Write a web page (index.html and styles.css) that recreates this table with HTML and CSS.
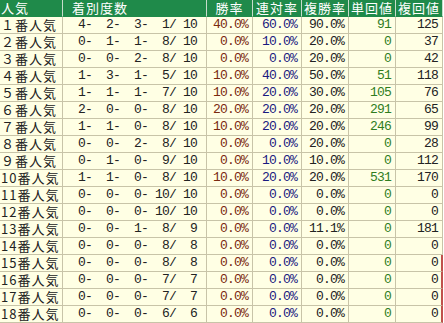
FILE: index.html
```html
<!DOCTYPE html>
<html lang="ja">
<head>
<meta charset="utf-8">
<link rel="stylesheet" href="styles.css">
</head>
<body>
<div class="table">
  <div class="row head">
    <div class="c lbl">人気</div>
    <div class="c ch">着別度数</div>
    <div class="c cc">勝率</div>
    <div class="c cc">連対率</div>
    <div class="c cc">複勝率</div>
    <div class="c cc">単回値</div>
    <div class="c cc">複回値</div>
  </div>
  <div class="row"><div class="c lbl">１番人気</div><div class="c num rec">  4-  2-  3-  1/ 10</div><div class="c num win">40.0%</div><div class="c num ren">60.0%</div><div class="c num">90.0%</div><div class="c num tan">91</div><div class="c num">125</div></div>
  <div class="row"><div class="c lbl">２番人気</div><div class="c num rec">  0-  1-  1-  8/ 10</div><div class="c num win">0.0%</div><div class="c num ren">10.0%</div><div class="c num">20.0%</div><div class="c num tan">0</div><div class="c num">37</div></div>
  <div class="row"><div class="c lbl">３番人気</div><div class="c num rec">  0-  0-  2-  8/ 10</div><div class="c num win">0.0%</div><div class="c num ren">0.0%</div><div class="c num">20.0%</div><div class="c num tan">0</div><div class="c num">42</div></div>
  <div class="row"><div class="c lbl">４番人気</div><div class="c num rec">  1-  3-  1-  5/ 10</div><div class="c num win">10.0%</div><div class="c num ren">40.0%</div><div class="c num">50.0%</div><div class="c num tan">51</div><div class="c num">118</div></div>
  <div class="row"><div class="c lbl">５番人気</div><div class="c num rec">  1-  1-  1-  7/ 10</div><div class="c num win">10.0%</div><div class="c num ren">20.0%</div><div class="c num">30.0%</div><div class="c num tan">105</div><div class="c num">76</div></div>
  <div class="row"><div class="c lbl">６番人気</div><div class="c num rec">  2-  0-  0-  8/ 10</div><div class="c num win">20.0%</div><div class="c num ren">20.0%</div><div class="c num">20.0%</div><div class="c num tan">291</div><div class="c num">65</div></div>
  <div class="row"><div class="c lbl">７番人気</div><div class="c num rec">  1-  1-  0-  8/ 10</div><div class="c num win">10.0%</div><div class="c num ren">20.0%</div><div class="c num">20.0%</div><div class="c num tan">246</div><div class="c num">99</div></div>
  <div class="row"><div class="c lbl">８番人気</div><div class="c num rec">  0-  0-  2-  8/ 10</div><div class="c num win">0.0%</div><div class="c num ren">0.0%</div><div class="c num">20.0%</div><div class="c num tan">0</div><div class="c num">28</div></div>
  <div class="row"><div class="c lbl">９番人気</div><div class="c num rec">  0-  1-  0-  9/ 10</div><div class="c num win">0.0%</div><div class="c num ren">10.0%</div><div class="c num">10.0%</div><div class="c num tan">0</div><div class="c num">112</div></div>
  <div class="row"><div class="c lbl">10番人気</div><div class="c num rec">  1-  1-  0-  8/ 10</div><div class="c num win">10.0%</div><div class="c num ren">20.0%</div><div class="c num">20.0%</div><div class="c num tan">531</div><div class="c num">170</div></div>
  <div class="row"><div class="c lbl">11番人気</div><div class="c num rec">  0-  0-  0- 10/ 10</div><div class="c num win">0.0%</div><div class="c num ren">0.0%</div><div class="c num">0.0%</div><div class="c num tan">0</div><div class="c num">0</div></div>
  <div class="row"><div class="c lbl">12番人気</div><div class="c num rec">  0-  0-  0- 10/ 10</div><div class="c num win">0.0%</div><div class="c num ren">0.0%</div><div class="c num">0.0%</div><div class="c num tan">0</div><div class="c num">0</div></div>
  <div class="row"><div class="c lbl">13番人気</div><div class="c num rec">  0-  0-  1-  8/  9</div><div class="c num win">0.0%</div><div class="c num ren">0.0%</div><div class="c num">11.1%</div><div class="c num tan">0</div><div class="c num">181</div></div>
  <div class="row"><div class="c lbl">14番人気</div><div class="c num rec">  0-  0-  0-  8/  8</div><div class="c num win">0.0%</div><div class="c num ren">0.0%</div><div class="c num">0.0%</div><div class="c num tan">0</div><div class="c num">0</div></div>
  <div class="row"><div class="c lbl">15番人気</div><div class="c num rec">  0-  0-  0-  8/  8</div><div class="c num win">0.0%</div><div class="c num ren">0.0%</div><div class="c num">0.0%</div><div class="c num tan">0</div><div class="c num last">0</div></div>
  <div class="row"><div class="c lbl">16番人気</div><div class="c num rec">  0-  0-  0-  7/  7</div><div class="c num win">0.0%</div><div class="c num ren">0.0%</div><div class="c num">0.0%</div><div class="c num tan">0</div><div class="c num last">0</div></div>
  <div class="row"><div class="c lbl">17番人気</div><div class="c num rec">  0-  0-  0-  7/  7</div><div class="c num win">0.0%</div><div class="c num ren">0.0%</div><div class="c num">0.0%</div><div class="c num tan">0</div><div class="c num last">0</div></div>
  <div class="row"><div class="c lbl">18番人気</div><div class="c num rec">  0-  0-  0-  6/  6</div><div class="c num win">0.0%</div><div class="c num ren">0.0%</div><div class="c num">0.0%</div><div class="c num tan">0</div><div class="c num last">0</div></div>
</div>
</body>
</html>
```

FILE: styles.css
```css
html, body {
  margin: 0;
  padding: 0;
  background: #ffffff;
}
.table {
  width: 443px;
  display: flex;
  flex-direction: column;
}
.row {
  display: grid;
  grid-template-columns: 63px 144px 46px 49px 47px 47px 47px;
  height: 17px;
}
.c {
  box-sizing: border-box;
  height: 17px;
  border-right: 1px solid #c8c4a8;
  border-bottom: 1px solid #c8c4a8;
  background: #ffffe4;
  white-space: pre;
  line-height: 16px;
  color: #222222;
}
.lbl {
  font-family: "Noto Sans CJK JP", sans-serif;
  font-size: 13px;
  letter-spacing: 1px;
  padding-left: 1px;
}
.num {
  font-family: "Liberation Mono", monospace;
  font-size: 13px;
  letter-spacing: -0.8px;
  text-align: right;
  padding-right: 4px;
}
.rec {
  text-align: left;
  padding-left: 1px;
}
.win { color: #7a2a10; }
.ren { color: #1a1a80; }
.tan { color: #2f7d1e; }
.last {
  border-right: 2px solid #c0504d;
  padding-right: 3px;
}
.head .c {
  background: #1f8a4a;
  color: #ffffff;
  border-right: 1px solid #c6dccb;
  border-bottom: 1px solid #1f8a4a;
  font-family: "Noto Sans CJK JP", sans-serif;
  font-size: 13px;
  letter-spacing: 1px;
}
.ch {
  padding-left: 9px;
}
.cc {
  text-align: center;
}
```
